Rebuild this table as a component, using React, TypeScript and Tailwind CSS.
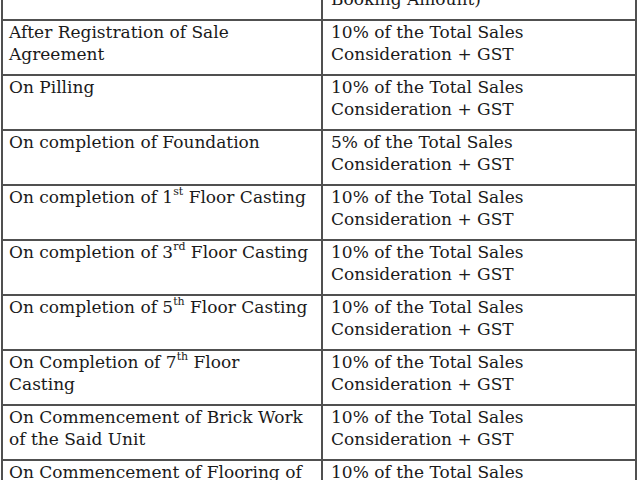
import React from "react";

type Row = { left: React.ReactNode; right: React.ReactNode };

const pay = (p: string) => (
  <>
    {p} of the Total Sales
    <br />
    Consideration + GST
  </>
);

const Sup = ({ children }: { children: React.ReactNode }) => (
  <sup className="text-[11px] relative top-[-1px] align-super leading-none">{children}</sup>
);

const rows: Row[] = [
  {
    left: <></>,
    right: (
      <>
        10% of the Total Sales (Including
        <br />
        Booking Amount)
      </>
    ),
  },
  { left: <>After Registration of Sale<br />Agreement</>, right: pay("10%") },
  { left: <>On Pilling</>, right: pay("10%") },
  { left: <>On completion of Foundation</>, right: pay("5%") },
  { left: <>On completion of 1<Sup>st</Sup> Floor Casting</>, right: pay("10%") },
  { left: <>On completion of 3<Sup>rd</Sup> Floor Casting</>, right: pay("10%") },
  { left: <>On completion of 5<Sup>th</Sup> Floor Casting</>, right: pay("10%") },
  { left: <>On Completion of 7<Sup>th</Sup> Floor<br />Casting</>, right: pay("10%") },
  { left: <>On Commencement of Brick Work<br />of the Said Unit</>, right: pay("10%") },
  { left: <>On Commencement of Flooring of<br />the Said Unit</>, right: pay("10%") },
];

export default function App() {
  return (
    <div className="w-[640px] h-[480px] overflow-hidden bg-white">
      <div
        className="ml-[1px] mt-[-36px] w-[636px] border-l-2 border-r-2 border-[#505050] text-[#1a1a1a] text-[17px] leading-[22px]"
        style={{ fontFamily: '"DejaVu Serif", serif' }}
      >
        {rows.map((r, i) => (
          <div key={i} className="grid grid-cols-[318px_1fr] h-[55px] border-t-2 border-[#505050]">
            <div className="pl-[6px] whitespace-nowrap">{r.left}</div>
            <div className="border-l-2 border-[#505050] pl-[8px] whitespace-nowrap">{r.right}</div>
          </div>
        ))}
      </div>
    </div>
  );
}
